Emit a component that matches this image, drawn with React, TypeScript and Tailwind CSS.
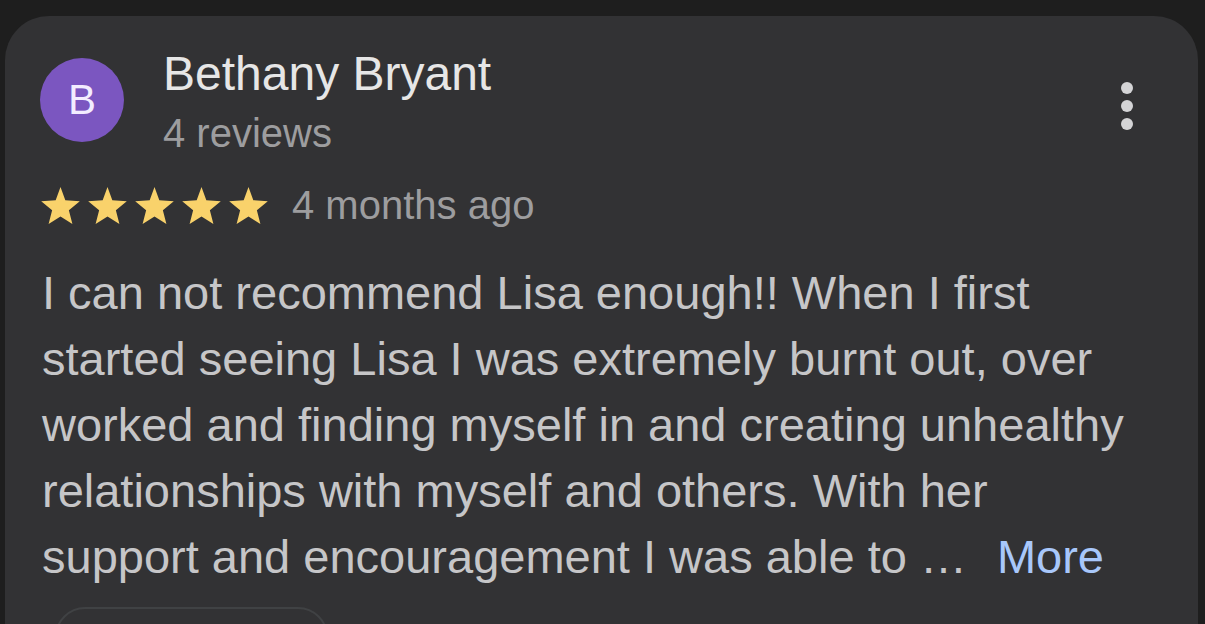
import React from "react";

const FONT = { fontFamily: '"Liberation Sans", Arial, sans-serif' };

function Star() {
  return (
    <svg width="39" height="37" viewBox="0 0 24 23" className="shrink-0">
      <polygon
        points="12,0 15,8.2 24,8.8 17.2,14.5 19.4,23 12,18.4 4.6,23 6.8,14.5 0,8.8 9,8.2"
        fill="#f9d26b"
      />
    </svg>
  );
}

const lines = [
  "I can not recommend Lisa enough!! When I first",
  "started seeing Lisa I was extremely burnt out, over",
  "worked and finding myself in and creating unhealthy",
  "relationships with myself and others. With her",
];

export default function App() {
  return (
    <div
      className="h-[624px] w-[1205px] overflow-hidden bg-[#1e1e1e] pt-[16px] pl-[5px] pr-[7px]"
      style={FONT}
    >
      <div className="h-[700px] rounded-t-[44px] bg-[#323234] pt-[30px] pl-[35px] pr-[65px]">
        {/* header */}
        <div className="flex items-start">
          <div className="mt-[12px] flex h-[84px] w-[84px] shrink-0 items-center justify-center rounded-full bg-[#7b56c0] text-[42px] leading-none text-[#f3ecff]">
            B
          </div>
          <div className="ml-[39px] flex-1">
            <div className="text-[48px] leading-[56px] text-[#e6e6e6]">Bethany Bryant</div>
            <div className="mt-[7px] text-[40px] leading-[48px] text-[#9d9d9f]">4 reviews</div>
          </div>
          <div className="mt-[36px] flex flex-col gap-[6px]">
            <span className="h-[12px] w-[12px] rounded-full bg-[#d4d4d6]" />
            <span className="h-[12px] w-[12px] rounded-full bg-[#d4d4d6]" />
            <span className="h-[12px] w-[12px] rounded-full bg-[#d4d4d6]" />
          </div>
        </div>

        {/* rating */}
        <div className="mt-[24px] flex items-center">
          <div className="ml-[1px] flex gap-[8px]">
            <Star />
            <Star />
            <Star />
            <Star />
            <Star />
          </div>
          <span className="ml-[24px] text-[40px] leading-[48px] text-[#9d9d9f]">4 months ago</span>
        </div>

        {/* review body */}
        <div className="mt-[31px] ml-[2px] whitespace-nowrap text-[47px] leading-[66px] text-[#c6c6c8]">
          {lines.map((l) => (
            <div key={l}>{l}</div>
          ))}
          <div>
            support and encouragement I was able to …
            <span className="ml-[30px] text-[#a8c7fa]">More</span>
          </div>
        </div>

        {/* action pill */}
        <div className="mt-[17px] ml-[15px] h-[60px] w-[273px] rounded-full border-2 border-[#404244]" />
      </div>
    </div>
  );
}
